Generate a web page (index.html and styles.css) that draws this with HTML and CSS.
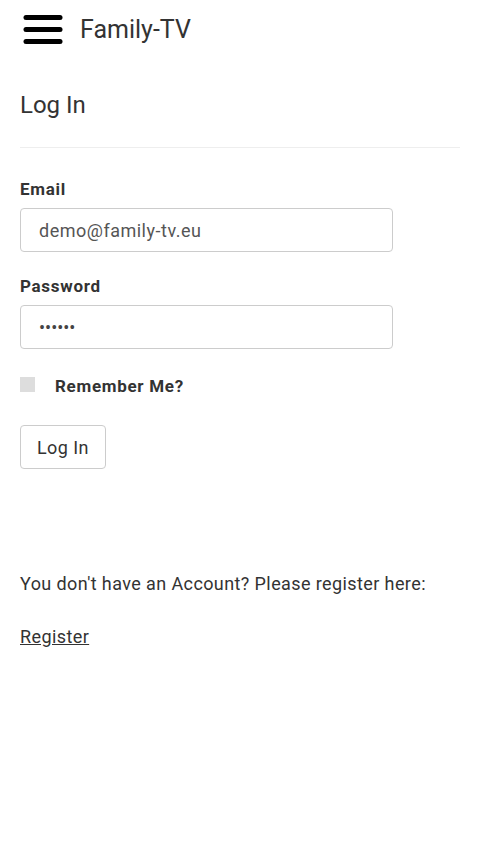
FILE: index.html
```html
<!DOCTYPE html>
<html lang="en">
<head>
<meta charset="utf-8">
<title>Family-TV - Log In</title>
<link rel="stylesheet" href="styles.css">
</head>
<body>
<header class="topbar">
  <svg class="menu-icon" width="44" height="32" viewBox="0 0 44 32" aria-hidden="true">
    <line x1="6" y1="4.5" x2="40" y2="4.5" stroke="#000" stroke-width="5" stroke-linecap="round"/>
    <line x1="6" y1="16.5" x2="40" y2="16.5" stroke="#000" stroke-width="5" stroke-linecap="round"/>
    <line x1="6" y1="28.5" x2="40" y2="28.5" stroke="#000" stroke-width="5" stroke-linecap="round"/>
  </svg>
  <span class="brand">Family-TV</span>
</header>
<main class="content">
  <h2 class="title">Log In</h2>
  <hr class="divider">
  <form class="login-form">
    <label class="field-label first" for="email">Email</label>
    <div class="input">demo@family-tv.eu</div>
    <label class="field-label" for="password">Password</label>
    <div class="input pw">••••••</div>
    <div class="remember">
      <span class="checkbox"></span>
      <span class="remember-text">Remember Me?</span>
    </div>
    <button type="button" class="btn">Log In</button>
  </form>
  <p class="register-text">You don't have an Account? Please register here:</p>
  <p class="register-link"><a href="#">Register</a></p>
</main>
</body>
</html>
```
FILE: styles.css
```css
html, body {
  margin: 0;
  padding: 0;
  background: #fff;
  font-family: Roboto, "Noto Sans", sans-serif;
  color: #333;
}
.topbar {
  display: flex;
  align-items: center;
  height: 58px;
  padding-left: 20px;
}
.menu-icon {
  display: block;
}
.brand {
  margin-left: 16px;
  font-size: 25px;
  color: #333;
}
.content {
  padding: 0 20px;
}
.title {
  margin: 32px 0 0;
  font-size: 24px;
  font-weight: 400;
  line-height: 30px;
  color: #333;
}
.divider {
  border: 0;
  border-top: 1px solid #eee;
  margin: 27px 0 0;
}
.login-form {
  display: flex;
  flex-direction: column;
  align-items: flex-start;
}
.field-label {
  font-size: 17px;
  font-weight: 700;
  letter-spacing: 0.7px;
  color: #333;
  line-height: 20px;
  margin-top: 24px;
  margin-bottom: 9px;
}
.field-label.first {
  margin-top: 31px;
}
.input {
  box-sizing: border-box;
  width: 373px;
  height: 44px;
  border: 1px solid #ccc;
  border-radius: 4px;
  padding: 0 18px;
  display: flex;
  align-items: center;
  font-size: 18px;
  letter-spacing: 0.5px;
  color: #555;
}
.input.pw {
  font-size: 18px;
  letter-spacing: 0;
  color: #444;
}
.remember {
  display: flex;
  align-items: baseline;
  margin-top: 27px;
}
.checkbox {
  width: 15px;
  height: 15px;
  background: #ddd;
}
.remember-text {
  margin-left: 20px;
  font-size: 17px;
  font-weight: 700;
  letter-spacing: 0.7px;
  color: #333;
}
.btn {
  margin-top: 29px;
  height: 44px;
  padding: 0 16px;
  background: #fff;
  border: 1px solid #ccc;
  border-radius: 4px;
  font-family: Roboto, "Noto Sans", sans-serif;
  font-size: 18px;
  letter-spacing: 0.4px;
  color: #333;
}
.register-text {
  margin: 103px 0 0;
  font-size: 18px;
  letter-spacing: 0.4px;
  line-height: 24px;
  color: #333;
}
.register-link {
  margin: 29px 0 0;
  font-size: 18px;
  letter-spacing: 0.4px;
  line-height: 24px;
}
.register-link a {
  color: #333;
}
```
